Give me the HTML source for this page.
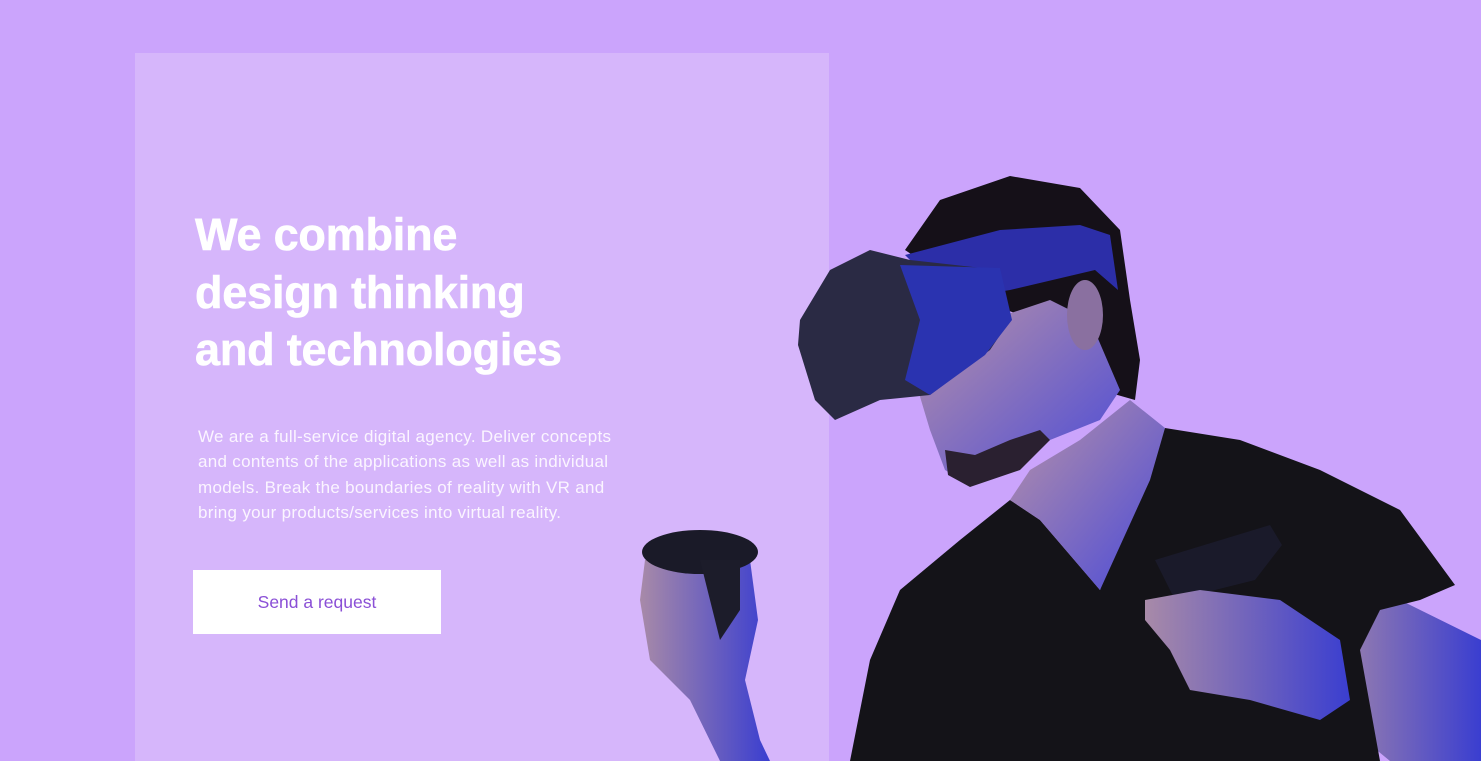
<!DOCTYPE html>
<html><head><meta charset="utf-8"><style>
html,body{margin:0;padding:0}
body{width:1481px;height:761px;background:#cba4fc;position:relative;overflow:hidden;font-family:"Liberation Sans",Arial,sans-serif}
.panel{position:absolute;left:135px;top:53px;width:694px;height:708px;background:#d6b6fb}
h1{position:absolute;left:195px;top:206px;margin:0;color:#fff;font-size:45px;line-height:57.5px;font-weight:bold;letter-spacing:-0.2px;-webkit-text-stroke:0.6px #fff}
p{position:absolute;left:198px;top:424px;margin:0;color:#fbf5ff;font-size:17px;line-height:25.3px;white-space:nowrap;letter-spacing:0.3px}
.btn{position:absolute;left:193px;top:570px;width:248px;height:64px;background:#fff;color:#8a4fd6;font-size:17.5px;line-height:64px;text-align:center}
svg{position:absolute;left:0;top:0}
</style></head><body>
<div class="panel"></div>
<h1>We combine<br>design thinking<br>and technologies</h1>
<p>We are a full-service digital agency. Deliver concepts<br>and contents of the applications as well as individual<br>models. Break the boundaries of reality with VR and<br>bring your products/services into virtual reality.</p>
<div class="btn">Send a request</div>
<svg width="1481" height="761" viewBox="0 0 1481 761">
<defs>
<linearGradient id="sk" x1="0" y1="0" x2="1" y2="1"><stop offset="0" stop-color="#b892a8"/><stop offset="1" stop-color="#4a4ad8"/></linearGradient>
<linearGradient id="sk2" x1="0" y1="0" x2="1" y2="0"><stop offset="0" stop-color="#a88aa8"/><stop offset="1" stop-color="#3a3ed0"/></linearGradient>
</defs>
<path d="M1320 610 L1400 600 L1481 640 L1481 761 L1390 761 L1340 720 Z" fill="url(#sk2)"/>
<path d="M850 761 L870 660 L900 590 L960 540 L1010 500 L1040 520 L1100 590 L1140 470 L1165 428 L1240 440 L1320 470 L1400 510 L1455 585 L1420 600 L1380 610 L1360 650 L1380 761 Z" fill="#141318"/>
<path d="M1010 500 L1030 470 L1080 440 L1130 400 L1165 428 L1150 480 L1100 590 L1040 520 Z" fill="url(#sk)"/>
<path d="M905 250 L940 200 L1010 176 L1080 188 L1120 230 L1130 300 L1140 360 L1135 400 L1100 390 L1060 330 L980 300 Z" fill="#151018"/>
<path d="M915 380 L960 330 L1050 300 L1090 320 L1120 390 L1100 420 L1050 440 L1010 470 L970 485 L945 470 L930 430 Z" fill="url(#sk)"/>
<path d="M945 450 L975 455 L1010 440 L1040 430 L1050 440 L1020 470 L970 487 L948 475 Z" fill="#2a2030"/>
<ellipse cx="1085" cy="315" rx="18" ry="35" fill="#8a70a0"/>
<path d="M905 255 L1000 230 L1080 225 L1110 235 L1118 290 L1095 270 L1010 290 L950 300 Z" fill="#2c2ea8"/>
<path d="M800 320 L830 270 L870 250 L910 260 L1000 270 L1010 320 L990 350 L930 395 L880 400 L835 420 L815 400 L798 345 Z" fill="#2a2a44"/>
<path d="M900 265 L1000 268 L1012 320 L985 355 L930 395 L905 380 L920 320 Z" fill="#2a33b0"/>
<path d="M645 560 L700 545 L750 560 L758 620 L745 680 L760 740 L770 761 L720 761 L690 700 L650 660 L640 600 Z" fill="url(#sk2)"/>
<ellipse cx="700" cy="552" rx="58" ry="22" fill="#1a1a28"/>
<path d="M700 560 L740 560 L740 610 L720 640 Z" fill="#1c1c2a"/>
<path d="M1155 560 L1270 525 L1282 545 L1255 580 L1175 600 Z" fill="#1a1a2a"/>
<path d="M1145 600 L1200 590 L1280 600 L1340 640 L1350 700 L1320 720 L1250 700 L1190 690 L1170 650 L1145 620 Z" fill="url(#sk2)"/>
</svg>
</body></html>
